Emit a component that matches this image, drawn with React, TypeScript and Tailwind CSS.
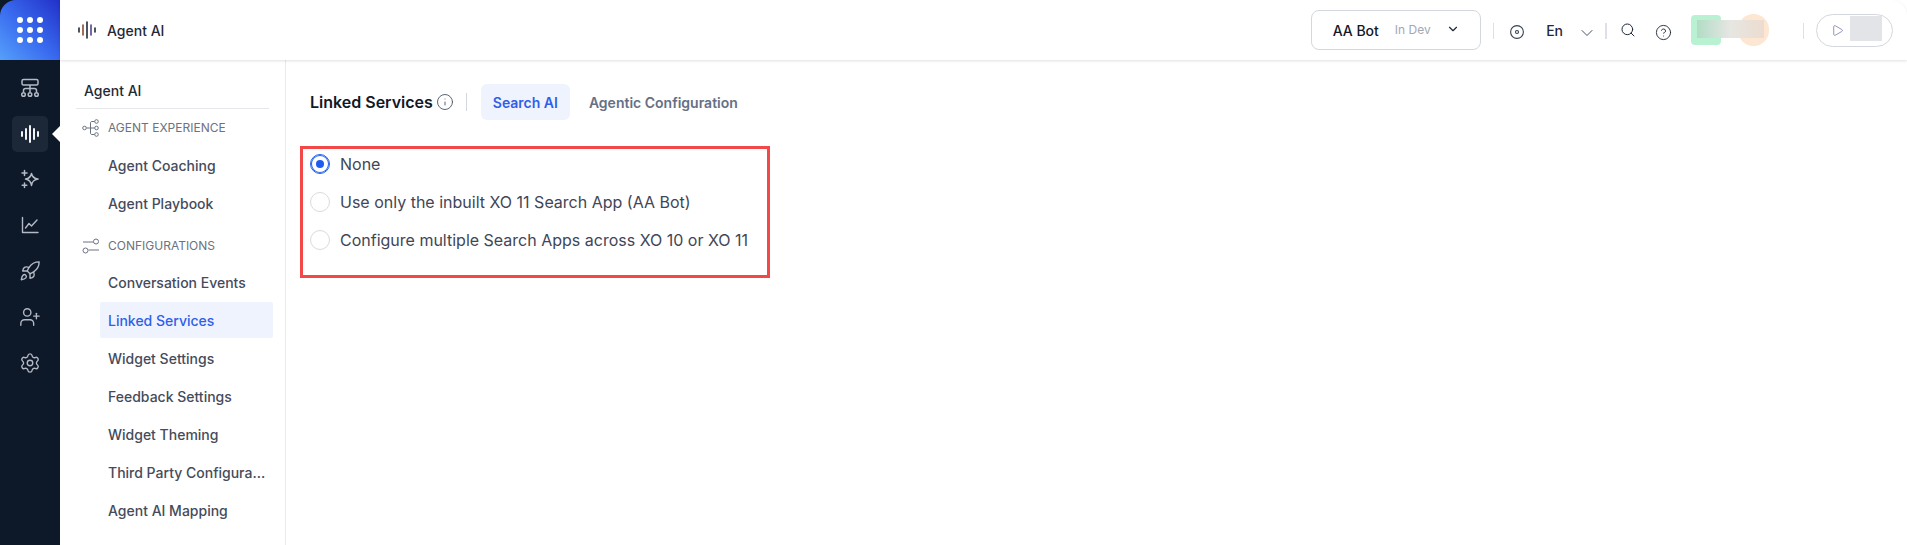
import { Settings, Rocket, UserPlus, ChevronDown, Search, CircleHelp, Info, Play } from "lucide-react";

const pages = ["Conversation Events", "Linked Services", "Widget Settings", "Feedback Settings", "Widget Theming", "Third Party Configura...", "Agent AI Mapping"];

function Wave({ className, colors, width = 1.6 }: { className?: string; colors?: string[]; width?: number }) {
  const c = colors ?? ["currentColor", "currentColor", "currentColor", "currentColor", "currentColor"];
  return (
    <svg viewBox="0 0 18 18" fill="none" strokeWidth={width} strokeLinecap="round" className={className}>
      <path d="M1 7v4" stroke={c[0]} />
      <path d="M5 4v10" stroke={c[1]} />
      <path d="M9 1v16" stroke={c[2]} />
      <path d="M13 4v10" stroke={c[3]} />
      <path d="M17 7v4" stroke={c[4]} />
    </svg>
  );
}

function Flow() {
  return (
    <svg viewBox="0 0 18 18" fill="none" stroke="#6b7280" strokeWidth="1" className="h-[18px] w-[18px] shrink-0">
      <circle cx="2.5" cy="9" r="1.8" />
      <circle cx="14.5" cy="2.5" r="1.8" />
      <circle cx="14.5" cy="9" r="1.8" />
      <circle cx="14.5" cy="15.5" r="1.8" />
      <path d="M4.5 9h8M8.5 9V4c0-1 .5-1.5 1.5-1.5h2.6M8.5 9v5c0 1 .5 1.5 1.5 1.5h2.6" />
    </svg>
  );
}

function Sliders() {
  return (
    <svg viewBox="0 0 18 18" fill="none" stroke="#6b7280" strokeWidth="1" className="h-[18px] w-[18px] shrink-0">
      <path d="M1 5h10.5M6.5 13H17" />
      <circle cx="14" cy="4.5" r="2.5" />
      <circle cx="3.5" cy="13.5" r="2.5" />
    </svg>
  );
}

function Org() {
  return (
    <svg viewBox="0 0 20 20" fill="none" stroke="currentColor" strokeWidth="1.5" className="h-[20px] w-[20px]">
      <rect x="2" y="1.5" width="16" height="5.5" rx="1.5" />
      <path d="M10 7v7M3.5 14v-1.5c0-1.2.8-2 2-2h9c1.2 0 2 .8 2 2V14" />
      <circle cx="3.5" cy="16.5" r="1.8" />
      <circle cx="10" cy="16.5" r="1.8" />
      <circle cx="16.5" cy="16.5" r="1.8" />
    </svg>
  );
}

function Sparkles() {
  return (
    <svg viewBox="0 0 20 20" fill="none" stroke="currentColor" strokeWidth="1.5" strokeLinejoin="round" className="h-[20px] w-[20px]">
      <path d="M11.5 4.5c.7 3.4 2.2 4.9 6.5 5.6-4.3.7-5.8 2.2-6.5 6.4-.7-4.2-2.2-5.7-6-6.4 3.8-.7 5.3-2.2 6-5.6Z" />
      <path d="M4.5 1.5v5M2 4h5M4.5 14v4.5M2.2 16.2h4.6" strokeLinecap="round" />
    </svg>
  );
}

function Chart() {
  return (
    <svg viewBox="0 0 18 18" fill="none" stroke="currentColor" strokeWidth="1.4" strokeLinecap="round" strokeLinejoin="round" className="h-[18px] w-[18px]">
      <path d="M1.5 1.5V16.5H17" />
      <path d="M4.5 12 8 7.5l2.5 2.5 5.5-6" />
    </svg>
  );
}

function Target() {
  return (
    <svg viewBox="0 0 14 14" fill="none" stroke="#374151" strokeWidth="1.1" className="mt-[3px] h-[14px] w-[14px]">
      <circle cx="7" cy="7" r="6.4" />
      <circle cx="7" cy="7" r="1.5" />
    </svg>
  );
}

function Divider({ className }: { className: string }) {
  return <span className={`mt-[2px] h-[16px] w-[1.5px] bg-[#dde0e8] ${className}`} />;
}

function RailSlot({ children }: { children: React.ReactNode }) {
  return <div className="flex h-[46px] w-full items-center justify-center">{children}</div>;
}

function Radio({ label, checked }: { label: string; checked?: boolean }) {
  return (
    <div className="flex h-[38px] items-center gap-[10px]">
      <span className={`flex h-[20px] w-[20px] items-center justify-center rounded-full border ${checked ? "border-[#2563eb] shadow-[0_0_0_1px_#2563eb_inset]" : "border-[#d9dbe0]"}`}>
        {checked && <span className="h-[8px] w-[8px] rounded-full bg-[#1d5cf0]" />}
      </span>
      <span className="text-[16px] leading-[20px] text-[#3f4656]">{label}</span>
    </div>
  );
}

function NavItem({ label, active }: { label: string; active?: boolean }) {
  return (
    <div className={`ml-[24px] mb-[2px] flex h-[36px] w-[173px] items-center whitespace-nowrap rounded-[2px] pl-[8px] text-[14px] font-medium ${active ? "bg-[#eff3fe] text-[#2f5fe8]" : "text-[#454b5b]"}`}>
      {label}
    </div>
  );
}

export default function App() {
  return (
    <div className="flex h-[545px] w-[1907px] overflow-hidden bg-white font-['Inter',sans-serif]">
      {/* left rail */}
      <div className="flex h-full w-[60px] shrink-0 flex-col items-center bg-[#0d1828] text-[#b3bac5]">
        <div className="flex h-[60px] w-full items-center justify-center rounded-tl-[16px] bg-[linear-gradient(225deg,#2230c8_0%,#3a6df0_55%,#55a0fb_100%)]">
          <div className="grid grid-cols-3 gap-x-[4px] gap-y-[4px]">
            {Array.from({ length: 9 }).map((_, i) => (
              <span key={i} className="h-[6px] w-[6px] rounded-full bg-white" />
            ))}
          </div>
        </div>
        <div className="flex h-[56px] w-full items-center justify-center">
          <Org />
        </div>
        <div className="relative flex h-[36px] w-[36px] items-center justify-center rounded-[5px] bg-[#1c2837] text-white">
          <Wave className="h-[18px] w-[18px]" width={1.9} />
          <span className="absolute left-[40px] top-[10px] h-0 w-0 border-y-[8px] border-r-[8px] border-y-transparent border-r-white" />
        </div>
        <div className="mt-[4px] flex w-full flex-col">
          <RailSlot><Sparkles /></RailSlot>
          <RailSlot><Chart /></RailSlot>
          <RailSlot><Rocket size={22} strokeWidth={1.5} /></RailSlot>
          <RailSlot><UserPlus size={22} strokeWidth={1.5} /></RailSlot>
          <RailSlot><Settings size={22} strokeWidth={1.5} /></RailSlot>
        </div>
      </div>

      <div className="flex min-w-0 flex-1 flex-col">
        {/* top bar */}
        <header className="relative z-10 flex h-[60px] shrink-0 items-center rounded-tr-[16px] bg-white pl-[18px] shadow-[0_1px_3px_rgba(0,0,0,0.12)]">
          <Wave className="h-[18px] w-[18px]" colors={["#1f2937", "#8a4a34", "#1f2937", "#56408f", "#1f2937"]} />
          <span className="ml-[11px] text-[14px] font-medium text-[#1f2937]">Agent AI</span>

          <div className="ml-auto flex items-center pr-[14px]">
            <div className="flex h-[40px] w-[170px] items-center rounded-[8px] border border-[#d4d7de] pl-[21px]">
              <span className="text-[14px] font-medium text-[#111827]">AA Bot</span>
              <span className="ml-[16px] text-[12px] text-[#a3a8b3]">In Dev</span>
              <ChevronDown size={14} className="ml-[15px] -mt-[2px] text-[#1f2937]" />
            </div>
            <Divider className="ml-[12px]" />
            <span className="ml-[16px] flex"><Target /></span>
            <span className="ml-[22px] text-[14px] font-medium text-[#1f2937]">En</span>
            <ChevronDown size={20} strokeWidth={1.1} className="ml-[14px] mt-[6px] text-[#374151]" />
            <Divider className="ml-[8px]" />
            <Search size={16} strokeWidth={1.5} className="ml-[13px] text-[#1f2937]" />
            <CircleHelp size={17} strokeWidth={1.3} className="ml-[19px] mt-[4px] text-[#1f2937]" />
            {/* blurred user chip */}
            <div className="relative ml-[19px] h-[32px] w-[78px]">
              <span className="absolute left-0 top-[1px] h-[30px] w-[30px] rounded-[4px] bg-[#b9f2d3] blur-[0.5px]" />
              <span className="absolute left-[47px] top-0 h-[32px] w-[31px] rounded-full bg-[#fde6d2] blur-[0.5px]" />
              <span className="absolute left-[6px] top-[6px] h-[18px] w-[67px] bg-[linear-gradient(90deg,#b2dcc6,#e6e6e2_50%,#ecdccf)]" />
            </div>
            <Divider className="ml-[34px]" />
            <div className="relative ml-[12px] flex h-[33px] w-[77px] items-center rounded-full border border-[#d4d7de] pl-[14px]">
              <Play size={13} strokeWidth={1.2} className="text-[#5b5b96]" />
              <span className="absolute left-[33px] top-[1px] h-[25px] w-[32px] bg-[#e3e4e7]" />
            </div>
          </div>
        </header>

        <div className="flex min-h-0 flex-1">
          {/* sub navigation */}
          <aside className="w-[226px] shrink-0 border-r border-[#e8eaee] pl-[16px] pt-[19px]">
            <div className="h-[30px] w-[193px] border-b border-[#e5e7eb] pl-[8px] text-[14px] font-medium leading-[24px] text-[#1f2937]">Agent AI</div>
            <div className="flex h-[38px] items-center gap-[8px] pl-[6px] text-[12px] text-[#6b7280]">
              <Flow />
              AGENT EXPERIENCE
            </div>
            <NavItem label="Agent Coaching" />
            <NavItem label="Agent Playbook" />
            <div className="mt-[7px] flex h-[36px] items-center gap-[8px] pl-[6px] text-[12px] text-[#6b7280]">
              <Sliders />
              CONFIGURATIONS
            </div>
            {pages.map((p) => (
              <NavItem key={p} label={p} active={p === "Linked Services"} />
            ))}
          </aside>

          {/* main */}
          <main className="min-w-0 flex-1 pl-[14px] pt-[24px]">
            <div className="flex h-[36px] items-center pl-[10px]">
              <span className="text-[16px] font-semibold text-[#111827]">Linked Services</span>
              <Info size={18} strokeWidth={1.2} className="ml-[3px] text-[#4b5563]" />
              <span className="ml-[12px] h-[18px] w-px bg-[#d4d7de]" />
              <span className="ml-[14px] flex h-[36px] w-[89px] items-center justify-center rounded-[6px] bg-[#eff3fe] text-[14px] font-semibold text-[#2f5fe8]">Search AI</span>
              <span className="ml-[19px] text-[14px] font-semibold text-[#667085]">Agentic Configuration</span>
            </div>
            <div className="mt-[26px] h-[132px] w-[470px] border-[3px] border-[#f24848] pl-[7px]">
              <div className="-mt-[4px]">
                <Radio label="None" checked />
                <Radio label="Use only the inbuilt XO 11 Search App (AA Bot)" />
                <Radio label="Configure multiple Search Apps across XO 10 or XO 11" />
              </div>
            </div>
          </main>
        </div>
      </div>
    </div>
  );
}
